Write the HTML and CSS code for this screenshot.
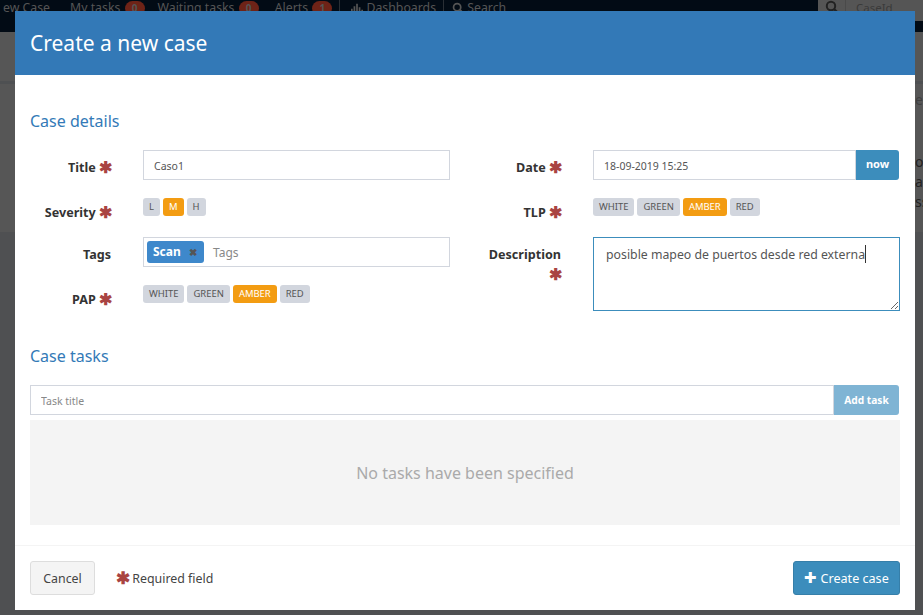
FILE: index.html
```html
<!DOCTYPE html>
<html lang="en">
<head>
    <meta charset="UTF-8">
    <title>Create a new case</title>
    <link rel="stylesheet" href="styles.css">
</head>
<body>

    <!-- page behind the dialog -->
    <div class="navbar">
        <span class="nav-item nav-cut">ew Case</span>
        <span class="nav-item nav-tasks">My tasks <b class="count">0</b></span>
        <span class="nav-item">Waiting tasks <b class="count">0</b></span>
        <span class="nav-item">Alerts <b class="count">1</b></span>
        <span class="nav-sep"></span>
        <span class="nav-item">
            <svg class="nav-icon" viewBox="0 0 14 14"><path d="M0 8h2v5H0zM3 5h2v8H3zM6 2h2v11H6zM9 6h2v7H9zM12 9h2v4h-2z" fill="currentColor"/></svg>
            Dashboards
        </span>
        <span class="nav-sep nav-sep-last"></span>
        <span class="nav-item">
            <svg class="nav-icon" viewBox="0 0 14 14"><circle cx="6" cy="6" r="4.2" fill="none" stroke="currentColor" stroke-width="2"/><path d="M9 9l4 4" stroke="currentColor" stroke-width="2.4"/></svg>
            Search
        </span>
        <div class="nav-search">
            <span class="nav-search-btn">
                <svg class="nav-icon" viewBox="0 0 14 14"><circle cx="6" cy="6" r="4.2" fill="none" stroke="currentColor" stroke-width="2"/><path d="M9 9l4 4" stroke="currentColor" stroke-width="2.4"/></svg>
            </span>
            <span class="nav-search-input">CaseId</span>
        </div>
    </div>
    <div class="page-behind">
        <p class="behind-line behind-top">e</p>
        <p class="behind-line">on</p>
        <p class="behind-line">a</p>
        <p class="behind-line">ss</p>
    </div>

    <!-- dialog -->
    <div class="modal">
        <div class="modal-header">Create a new case</div>

        <div class="modal-body">
            <h4 class="section-title">Case details</h4>

            <div class="form-columns">
                <div class="form-col">
                    <div class="row row-title">
                        <label class="lbl">Title <span class="req">&#10033;</span></label>
                        <input class="field" type="text" value="Caso1">
                    </div>
                    <div class="row row-pills">
                        <label class="lbl">Severity <span class="req">&#10033;</span></label>
                        <div class="pills">
                            <span class="pill">L</span>
                            <span class="pill active">M</span>
                            <span class="pill">H</span>
                        </div>
                    </div>
                    <div class="row row-tags">
                        <label class="lbl">Tags</label>
                        <div class="field tags-field">
                            <span class="tag">Scan <span class="tag-x">&#10006;</span></span>
                            <span class="tags-ph">Tags</span>
                        </div>
                    </div>
                    <div class="row row-pills">
                        <label class="lbl">PAP <span class="req">&#10033;</span></label>
                        <div class="pills">
                            <span class="pill">WHITE</span>
                            <span class="pill">GREEN</span>
                            <span class="pill active">AMBER</span>
                            <span class="pill">RED</span>
                        </div>
                    </div>
                </div>

                <div class="form-col">
                    <div class="row row-title">
                        <label class="lbl">Date <span class="req">&#10033;</span></label>
                        <div class="input-group date-group">
                            <input class="field" type="text" value="18-09-2019 15:25">
                            <span class="btn-now">now</span>
                        </div>
                    </div>
                    <div class="row row-pills">
                        <label class="lbl">TLP <span class="req">&#10033;</span></label>
                        <div class="pills">
                            <span class="pill">WHITE</span>
                            <span class="pill">GREEN</span>
                            <span class="pill active">AMBER</span>
                            <span class="pill">RED</span>
                        </div>
                    </div>
                    <div class="row">
                        <label class="lbl">Description <span class="req">&#10033;</span></label>
                        <div class="desc-wrap">
                            <textarea class="field desc">posible mapeo de puertos desde red externa</textarea>
                            <span class="caret"></span>
                        </div>
                    </div>
                </div>
            </div>

            <h4 class="section-title">Case tasks</h4>

            <div class="input-group task-group">
                <input class="field" type="text" placeholder="Task title">
                <span class="btn-add">Add task</span>
            </div>
            <div class="empty-tasks">No tasks have been specified</div>
        </div>

        <div class="modal-footer">
            <button class="btn-cancel">Cancel</button>
            <span class="req-note"><span class="req">&#10033;</span> Required field</span>
            <button class="btn-create"><span class="plus">&#10010;</span> Create case</button>
        </div>
    </div>

</body>
</html>
```
FILE: styles.css
```css
* {
    box-sizing: border-box;
}
html, body {
    height: 100%;
}
body {
    margin: 0;
    overflow: hidden;
    background-color: #4f5052;
    font-family: "Noto Sans", sans-serif;
    font-size: 13px;
    color: #333;
}

/* navbar behind the modal */
.navbar {
    display: flex;
    align-items: flex-start;
    height: 32px;
    padding-left: 3px;
    background-color: #020b15;
    color: #555;
    font-size: 12.3px;
    line-height: 15px;
    white-space: nowrap;
}
.nav-item {
    margin-right: 16px;
}
.nav-cut {
    margin-right: 20px;
}
.nav-tasks {
    margin-right: 13px;
}
.nav-icon {
    width: 12px;
    height: 12px;
    vertical-align: -2px;
}
.nav-sep {
    width: 1px;
    height: 16px;
    margin-right: 11px;
    margin-left: -9px;
    background-color: #2a2f35;
}
.nav-sep-last {
    margin-right: 8px;
}
.count {
    display: inline-block;
    width: 20px;
    margin-left: 1px;
    border-radius: 10px;
    background-color: #6e2317;
    color: #555;
    font-size: 10px;
    text-align: center;
}
.nav-search {
    display: flex;
    position: absolute;
    top: 0;
    right: 0;
    width: 105px;
    height: 21px;
    background-color: #555;
    color: #222;
}
.nav-search-btn {
    width: 27px;
    padding-left: 7px;
    line-height: 10px;
}
.nav-search-btn .nav-icon {
    width: 14px;
    height: 14px;
    vertical-align: -4px;
}
.nav-search-input {
    flex: 1;
    padding-left: 10px;
    border-left: 1px solid #4a4a4a;
    color: #3a3a3a;
    font-size: 11.5px;
}

.page-behind {
    height: 200px;
    padding: 58px 0 0 915px;
    background: linear-gradient(#565656 49px, #4e5052 49px, #4e5052 52px, #565656 52px);
    color: #222;
    font-size: 14px;
    line-height: 20px;
    white-space: nowrap;
}
.behind-line {
    margin: 0;
}
.behind-top {
    margin-bottom: 42px;
    color: #3f3f3f;
}

/* modal */
.modal {
    position: absolute;
    left: 15px;
    top: 11px;
    width: 900px;
    height: 599px;
    display: flex;
    flex-direction: column;
    background-color: #fff;
}
.modal-header {
    height: 64px;
    padding: 15px;
    background-color: #3379b7;
    color: #fff;
    font-size: 21px;
    line-height: 34px;
}
.modal-body {
    flex: 1;
    padding: 0 15px;
}
.section-title {
    margin: 0;
    color: #337ab7;
    font-size: 16px;
    font-weight: normal;
    line-height: 20px;
}
.modal-body > .section-title:first-child {
    margin-top: 36px;
}
.form-columns {
    display: flex;
    gap: 30px;
    margin: 19px 0 22px;
}
.form-col {
    width: 420px;
}
.row {
    display: flex;
    gap: 30px;
    align-items: flex-start;
}
.row-title {
    height: 30px;
    margin-bottom: 18px;
}
.row-pills {
    height: 18px;
    margin-bottom: 21px;
}
.row-tags {
    height: 30px;
    margin-bottom: 18px;
}
.lbl {
    width: 83px;
    padding-top: 8px;
    padding-right: 2px;
    font-size: 12.6px;
    font-weight: bold;
    line-height: 20px;
    text-align: right;
    color: #333;
}
.row-pills .lbl {
    padding-top: 5px;
}
.req {
    display: inline-block;
    width: 12px;
    color: #a94442;
    font-size: 16px;
    font-weight: bold;
    line-height: 12px;
    text-align: center;
    vertical-align: -1px;
}
.field {
    width: 307px;
    height: 30px;
    padding: 1px 10px 0;
    border: 1px solid #d2d6de;
    background-color: #fff;
    color: #555;
    font-family: inherit;
    font-size: 10.5px;
    outline: none;
}
.pills {
    display: flex;
    gap: 3px;
}
.pill {
    height: 18px;
    padding: 0 6px;
    border-radius: 3px;
    background-color: #d2d6de;
    color: #555;
    font-size: 9.45px;
    line-height: 18px;
}
.pill.active {
    background-color: #f39c12;
    color: #fff;
}
.tags-field {
    display: flex;
    align-items: center;
    padding: 0 3px;
}
.tag {
    height: 22px;
    width: 57px;
    padding: 0 6px;
    margin-right: 9px;
    border-radius: 3px;
    background-color: #3e88cb;
    color: #fff;
    font-size: 12px;
    font-weight: bold;
    line-height: 22px;
}
.tag-x {
    margin-left: 5px;
    color: #555;
    font-size: 10px;
}
.tags-ph {
    color: #888;
    font-size: 12px;
}
.input-group {
    display: flex;
    margin-right: 1px;
}
.date-group {
    width: 306px;
}
.input-group .field {
    flex: 1;
    width: auto;
    min-width: 0;
}
.btn-now {
    width: 43px;
    height: 30px;
    border-radius: 0 3px 3px 0;
    background-color: #3c8dbc;
    color: #fff;
    font-size: 11px;
    font-weight: bold;
    line-height: 28px;
    text-align: center;
}
.desc-wrap {
    position: relative;
}
.desc {
    display: block;
    height: 74px;
    padding: 8px 12px;
    border-color: #3c8dbc;
    font-size: 12.3px;
}
.caret {
    position: absolute;
    left: 272px;
    top: 8px;
    width: 1px;
    height: 18px;
    background-color: #333;
}
.task-group {
    margin-top: 19px;
}
.task-group .field::placeholder {
    color: #888;
}
.btn-add {
    width: 65px;
    height: 30px;
    border-radius: 0 3px 3px 0;
    background-color: #7fb4d4;
    color: #fff;
    font-size: 10.2px;
    font-weight: bold;
    line-height: 30px;
    text-align: center;
}
.empty-tasks {
    height: 105px;
    margin-top: 5px;
    background-color: #f4f4f4;
    color: #aaa;
    font-size: 16px;
    line-height: 107px;
    text-align: center;
}

/* footer */
.modal-footer {
    display: flex;
    align-items: center;
    height: 65px;
    padding: 0 15px;
    border-top: 1px solid #f4f4f4;
}
.btn-cancel {
    width: 65px;
    height: 34px;
    border: 1px solid #ddd;
    border-radius: 3px;
    background-color: #f4f4f4;
    color: #444;
    font-family: inherit;
    font-size: 12.4px;
}
.req-note {
    margin-left: 21px;
    color: #444;
    font-size: 12.4px;
}
.req-note .req {
    width: 13px;
    font-size: 17px;
}
.btn-create {
    width: 107px;
    height: 34px;
    margin-left: auto;
    border: 1px solid #367fa9;
    border-radius: 3px;
    background-color: #3c8dbc;
    color: #fff;
    font-family: inherit;
    font-size: 12.6px;
}
.plus {
    font-size: 15px;
    line-height: 12px;
}
```
